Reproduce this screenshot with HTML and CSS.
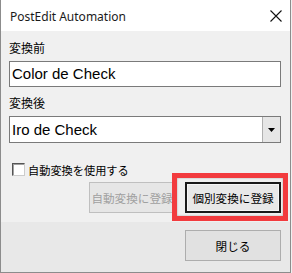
FILE: index.html
```html
<!DOCTYPE html>
<html lang="ja">
<head>
<meta charset="utf-8">
<link rel="stylesheet" href="styles.css">
</head>
<body>
<div class="window">
  <div class="titlebar">
    <span class="title">PostEdit Automation</span>
    <svg class="close" width="12" height="12" viewBox="0 0 12 12"><path d="M0.5 0.5 L11.5 11.5 M11.5 0.5 L0.5 11.5" stroke="#111" stroke-width="1.1" fill="none"/></svg>
  </div>
  <div class="content">
    <div class="label first">変換前</div>
    <div class="textbox">Color de Check</div>
    <div class="label second">変換後</div>
    <div class="combo">
      <span class="combo-text">Iro de Check</span>
      <span class="combo-btn"><svg width="7" height="4" viewBox="0 0 7 4"><path d="M0 0 H7 L3.5 4 Z" fill="#000"/></svg></span>
    </div>
    <div class="check-row">
      <span class="checkbox"></span>
      <span class="check-label">自動変換を使用する</span>
    </div>
    <div class="btn-row">
      <div class="btn disabled">自動変換に登録</div>
      <div class="btn default">個別変換に登録</div>
      <div class="highlight"></div>
    </div>
  </div>
  <div class="footer">
    <div class="btn">閉じる</div>
  </div>
</div>
</body>
</html>
```
FILE: styles.css
```css
html, body {
  margin: 0;
  padding: 0;
  width: 292px;
  height: 273px;
  overflow: hidden;
  background: #f0f0f0;
}
.window {
  box-sizing: border-box;
  width: 291px;
  height: 273px;
  border: 1px solid #8c8c8c;
  border-top: none;
  background: #f0f0f0;
  display: flex;
  flex-direction: column;
  font-family: "Noto Sans CJK JP", "Noto Sans", sans-serif;
}
.titlebar {
  height: 31px;
  background: #fff;
  display: flex;
  align-items: center;
  justify-content: space-between;
  padding: 0 8px 0 9px;
  flex-shrink: 0;
}
.title {
  font-family: "Noto Sans", sans-serif;
  font-size: 12px;
  color: #1a1a1a;
  padding-top: 2px;
}
.close {
  margin-top: 1px;
}
.content {
  padding: 9px 9px 0 8px;
}
.label {
  font-size: 12px;
  line-height: 16px;
  height: 16px;
  color: #000;
}
.textbox, .combo {
  box-sizing: border-box;
  background: #fff;
  border: 1px solid #7a7a7a;
  font-family: "Liberation Sans", Arial, sans-serif;
  font-size: 15px;
  color: #000;
}
.textbox {
  margin-top: 5px;
  height: 26px;
  line-height: 24px;
  padding-left: 2px;
}
.label.second {
  margin-top: 8px;
}
.combo {
  margin-top: 5px;
  height: 27px;
  display: flex;
  align-items: stretch;
}
.combo-text {
  flex: 1;
  line-height: 25px;
  padding-left: 2px;
}
.combo-btn {
  width: 17px;
  background: #e6e6e6;
  border-left: 1px solid #b0b0b0;
  display: flex;
  align-items: center;
  justify-content: center;
}
.check-row {
  margin-top: 20px;
  height: 13px;
  display: flex;
  align-items: center;
  padding-left: 3px;
}
.checkbox {
  box-sizing: border-box;
  width: 13px;
  height: 13px;
  background: #fff;
  border: 1px solid #555;
  border-right-color: #ccc;
  border-bottom-color: #ccc;
  box-shadow: inset 1px 1px 0 #a0a0a0;
}
.check-label {
  margin-left: 3px;
  font-size: 11.2px;
  color: #000;
}
.btn-row {
  position: relative;
  margin-top: 6px;
  display: flex;
  justify-content: flex-end;
  gap: 10px;
}
.btn {
  box-sizing: border-box;
  width: 96px;
  height: 31px;
  border: 1px solid #adadad;
  background: #e1e1e1;
  font-size: 11.6px;
  color: #000;
  display: flex;
  align-items: center;
  justify-content: center;
}
.btn.disabled {
  width: 86px;
  color: #a0a0a0;
  border-color: #bfbfbf;
  background: #e6e6e6;
}
.btn.default {
  border: 2px solid #1a1a1a;
  background: #e8e8e8;
  box-shadow: inset 0 0 0 1px #f6f6f6;
}
.highlight {
  position: absolute;
  left: 163px;
  top: -9px;
  width: 116px;
  height: 48px;
  box-sizing: border-box;
  border: 5px solid #f23b3e;
  box-shadow: inset 0 0 2px rgba(0,0,0,0.35);
}
.footer {
  flex: 1;
  margin-top: 9px;
  background: #e8e8e8;
  display: flex;
  justify-content: flex-end;
  align-items: flex-start;
  padding: 8px 9px 0 0;
}
```
